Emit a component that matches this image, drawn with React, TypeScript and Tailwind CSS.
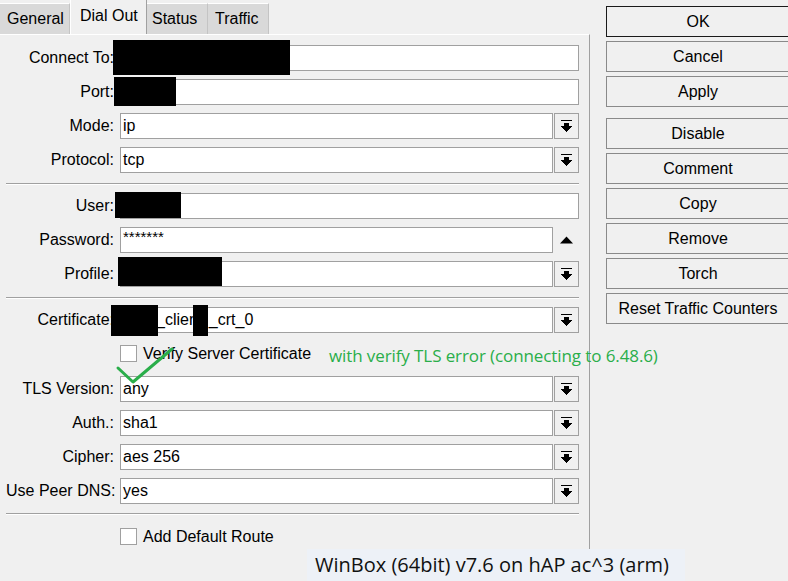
import React from "react";

const font = { fontFamily: '"Liberation Sans", Arial, sans-serif' };

function DropIcon() {
  return (
    <svg width="11" height="13" viewBox="0 0 11 13" shapeRendering="crispEdges">
      <rect x="0" y="0" width="11" height="1.2" fill="#000" />
      <rect x="3" y="3" width="5" height="3" fill="#000" />
      <polygon points="0,6 11,6 5.5,12" fill="#000" />
    </svg>
  );
}

function Label({ text }: { text: string }) {
  return <div className="w-[108px] shrink-0 text-right whitespace-nowrap">{text}</div>;
}

function Input({ children }: { children?: React.ReactNode }) {
  return (
    <div className="flex-1 h-[26px] bg-white border border-[#a0a0a0] pl-[2px] flex items-center whitespace-nowrap overflow-hidden">
      {children}
    </div>
  );
}

function Row({ label, value, kind }: { label: string; value?: React.ReactNode; kind?: "drop" | "up" | "none" }) {
  return (
    <div className="flex items-center h-[26px] gap-[6px]">
      <Label text={label} />
      <div className="flex-1 flex items-center gap-[1px] h-[26px]">
        <Input>{value}</Input>
        {kind === "drop" && (
          <div className="w-[25px] h-[26px] border border-[#a0a0a0] flex items-center justify-center">
            <DropIcon />
          </div>
        )}
        {kind === "up" && (
          <div className="w-[25px] h-[26px] flex items-center justify-center">
            <svg width="13" height="8" viewBox="0 0 13 8">
              <polygon points="0,7.5 13,7.5 6.5,0.5" fill="#000" />
            </svg>
          </div>
        )}
      </div>
    </div>
  );
}

function Sep({ cls }: { cls: string }) {
  return <div className={`${cls} h-[2px] border-t border-[#a0a0a0] border-b border-b-white`} />;
}

function Check({ label, cls }: { label: string; cls: string }) {
  return (
    <div className={`flex items-start gap-[6px] ${cls}`}>
      <div className="w-[108px] shrink-0" />
      <div className="w-[17px] h-[17px] bg-white border border-[#a0a0a0]" />
      <div className="leading-[17px]">{label}</div>
    </div>
  );
}

function Btn({ text, primary, cls }: { text: string; primary?: boolean; cls?: string }) {
  return (
    <div
      className={`w-[184px] h-[31px] flex items-center justify-center border ${
        primary ? "border-[#1a1a1a]" : "border-[#8a8a8a]"
      } bg-[#f0f0f0] ${cls ?? ""}`}
    >
      {text}
    </div>
  );
}

export default function App() {
  return (
    <div className="relative w-[788px] h-[581px] bg-[#f0f0f0] overflow-hidden text-[16px] text-black flex" style={font}>
      {/* left */}
      <div className="w-[590px] shrink-0 flex flex-col">
        <div className="h-[34px] flex items-end">
          <div className="w-[70px] h-[31px] bg-[#d9d9d9] border-t border-white border-r border-r-[#c4c4c4] flex items-center pl-[7px]">
            General
          </div>
          <div className="w-[77px] h-[34px] bg-[#f0f0f0] border-l border-white border-r border-r-[#a0a0a0] flex items-center pl-[9px] pb-[2px]">
            Dial Out
          </div>
          <div className="w-[61px] h-[31px] bg-[#d9d9d9] border-t border-white border-r border-r-[#c4c4c4] flex items-center pl-[5px]">
            Status
          </div>
          <div className="w-[61px] h-[31px] bg-[#d9d9d9] border-t border-white border-r border-r-[#c4c4c4] flex items-center pl-[7px]">
            Traffic
          </div>
        </div>
        <div className="flex-1 border-t border-white border-r border-r-[#a0a0a0] pt-[10px] pl-[6px] pr-[10px] flex flex-col">
          <div className="flex flex-col gap-[8px]">
            <Row label="Connect To:" />
            <Row label="Port:" />
            <Row label="Mode:" value="ip" kind="drop" />
            <Row label="Protocol:" value="tcp" kind="drop" />
          </div>
          <Sep cls="mt-[10px] mb-[8px]" />
          <div className="flex flex-col gap-[8px]">
            <Row label="User:" />
            <Row label="Password:" value={<span className="text-[15px] leading-none relative -top-[4px]">*******</span>} kind="up" />
            <Row label="Profile:" kind="drop" />
          </div>
          <Sep cls="mt-[10px] mb-[8px]" />
          <div className="flex flex-col">
            <Row
              label="Certificate:"
              kind="drop"
              value={
                <span className="flex items-center">
                  <span className="ml-[33px]">_clien</span>
                  <span className="w-[11px]" />
                  <span>_crt_0</span>
                </span>
              }
            />
            <Check label="Verify Server Certificate" cls="mt-[12px] mb-[14px]" />
            <div className="flex flex-col gap-[8px]">
              <Row label="TLS Version:" value="any" kind="drop" />
              <Row label="Auth.:" value="sha1" kind="drop" />
              <Row label="Cipher:" value="aes 256" kind="drop" />
              <Row label="Use Peer DNS:" value="yes" kind="drop" />
            </div>
          </div>
          <Sep cls="mt-[9px] mb-[13px]" />
          <Check label="Add Default Route" cls="" />
        </div>
      </div>

      {/* right */}
      <div className="flex-1 pl-[16px] pt-[6px] flex flex-col gap-[4px]">
        <Btn text="OK" primary />
        <Btn text="Cancel" />
        <Btn text="Apply" />
        <Btn text="Disable" cls="mt-[7px]" />
        <Btn text="Comment" />
        <Btn text="Copy" />
        <Btn text="Remove" />
        <Btn text="Torch" />
        <Btn text="Reset Traffic Counters" />
      </div>

      {/* redactions */}
      <div className="absolute left-[113px] top-[40px] w-[177px] h-[35px] bg-black" />
      <div className="absolute left-[114px] top-[77px] w-[62px] h-[29px] bg-black" />
      <div className="absolute left-[115px] top-[192px] w-[66px] h-[26px] bg-black" />
      <div className="absolute left-[118px] top-[257px] w-[104px] h-[29px] bg-black" />
      <div className="absolute left-[111px] top-[305px] w-[47px] h-[31px] bg-black" />
      <div className="absolute left-[193px] top-[305px] w-[15px] h-[31px] bg-black" />

      {/* annotations */}
      <svg className="absolute left-0 top-0 pointer-events-none" width="788" height="581">
        <polyline points="118,368 133,382 172,349" fill="none" stroke="#2aae4a" strokeWidth="3" strokeLinecap="round" strokeLinejoin="round" />
      </svg>
      <div
        className="absolute left-[329px] top-[343px] text-[17px] text-[#2aae4a] whitespace-nowrap"
        style={{ fontFamily: '"Open Sans", "Noto Sans", sans-serif', letterSpacing: "-0.1px" }}
      >
        with verify TLS error (connecting to 6.48.6)
      </div>
      <div
        className="absolute left-[307px] top-[549px] w-[378px] h-[32px] bg-[#edf1f7] flex items-center pl-[8px] text-[20px] text-[#111] whitespace-nowrap"
        style={{ fontFamily: '"Open Sans", "Noto Sans", sans-serif' }}
      >
        WinBox (64bit) v7.6 on hAP ac^3 (arm)
      </div>
    </div>
  );
}
